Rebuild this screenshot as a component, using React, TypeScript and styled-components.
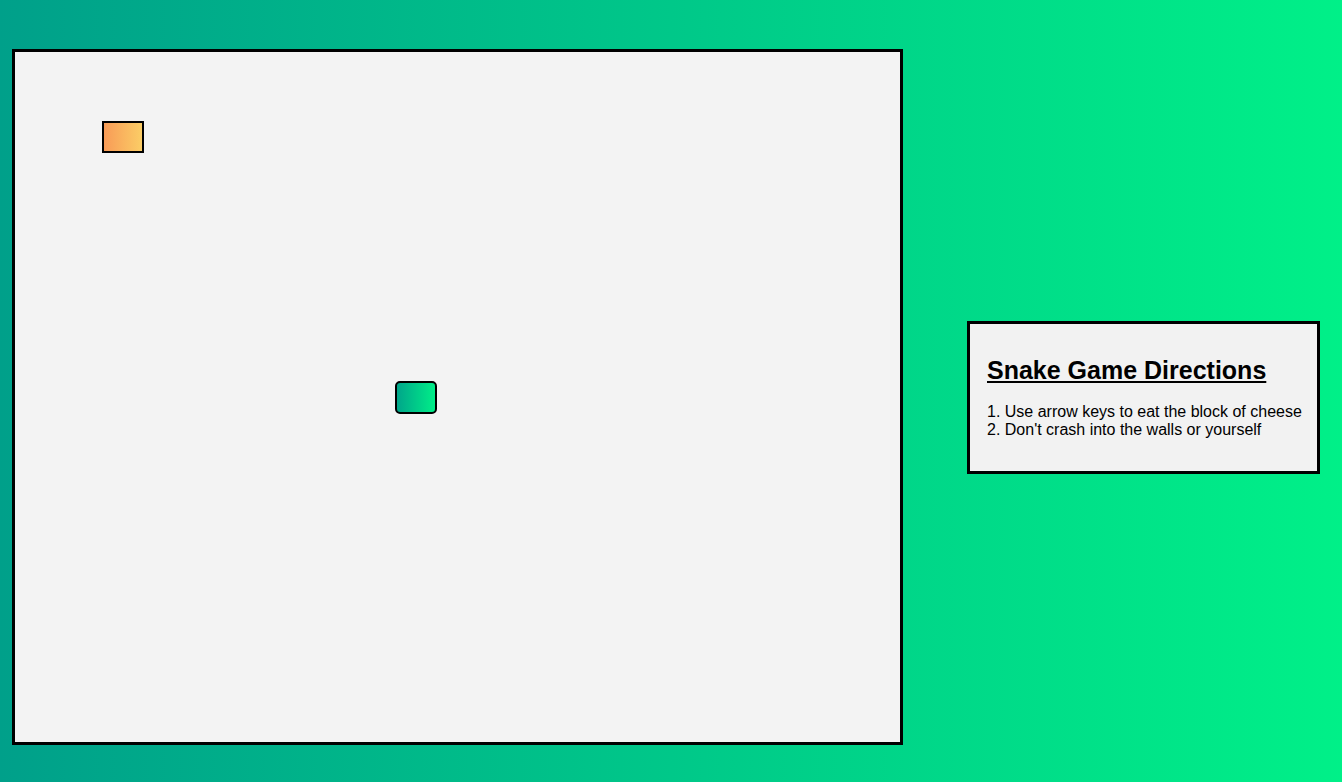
import React from "react";
import styled, { createGlobalStyle } from "styled-components";

const Global = createGlobalStyle`
  html, body { margin: 0; padding: 0; }
  body {
    font-family: "Liberation Sans", Arial, Helvetica, sans-serif;
    background: linear-gradient(to right, #00a08a, #00f088);
    min-height: 782px;
  }
`;

const Page = styled.div`
  display: flex;
  align-items: center;
  gap: 64px;
  padding: 49px 0 0 12px;
  height: 696px;
`;

const Board = styled.div`
  position: relative;
  box-sizing: border-box;
  width: 891px;
  height: 696px;
  flex: none;
  background: #f3f3f3;
  border: 3px solid #000;
`;

const Cell = styled.div<{ $kind: "food" | "snake" }>`
  position: absolute;
  box-sizing: border-box;
  width: 42px;
  height: ${(p) => (p.$kind === "food" ? "32px" : "33px")};
  border: 2px solid #000;
  border-radius: ${(p) => (p.$kind === "food" ? "0" : "5px")};
  background: ${(p) =>
    p.$kind === "food"
      ? "linear-gradient(to right, #f89b57, #fbcd66)"
      : "linear-gradient(to right, #00a68a, #00ee88)"};
`;

const Info = styled.div`
  box-sizing: border-box;
  width: 353px;
  height: 153px;
  flex: none;
  background: #f2f2f2;
  border: 3px solid #000;
  padding: 32px 17px 0 17px;
  margin-top: 1px;
`;

const Title = styled.h2`
  margin: 0 0 18px 0;
  font-size: 25px;
  font-weight: 700;
  text-decoration: underline;
  color: #000;
  line-height: 28.75px;
`;

const Line = styled.div`
  font-size: 16px;
  line-height: 18px;
  color: #000;
  white-space: nowrap;
`;

export default function App() {
  return (
    <>
      <Global />
      <Page>
        <Board>
          <Cell $kind="food" style={{ left: 87, top: 69 }} />
          <Cell $kind="snake" style={{ left: 380, top: 329 }} />
        </Board>
        <Info>
          <Title>Snake Game Directions</Title>
          <Line>1. Use arrow keys to eat the block of cheese</Line>
          <Line>2. Don't crash into the walls or yourself</Line>
        </Info>
      </Page>
    </>
  );
}
